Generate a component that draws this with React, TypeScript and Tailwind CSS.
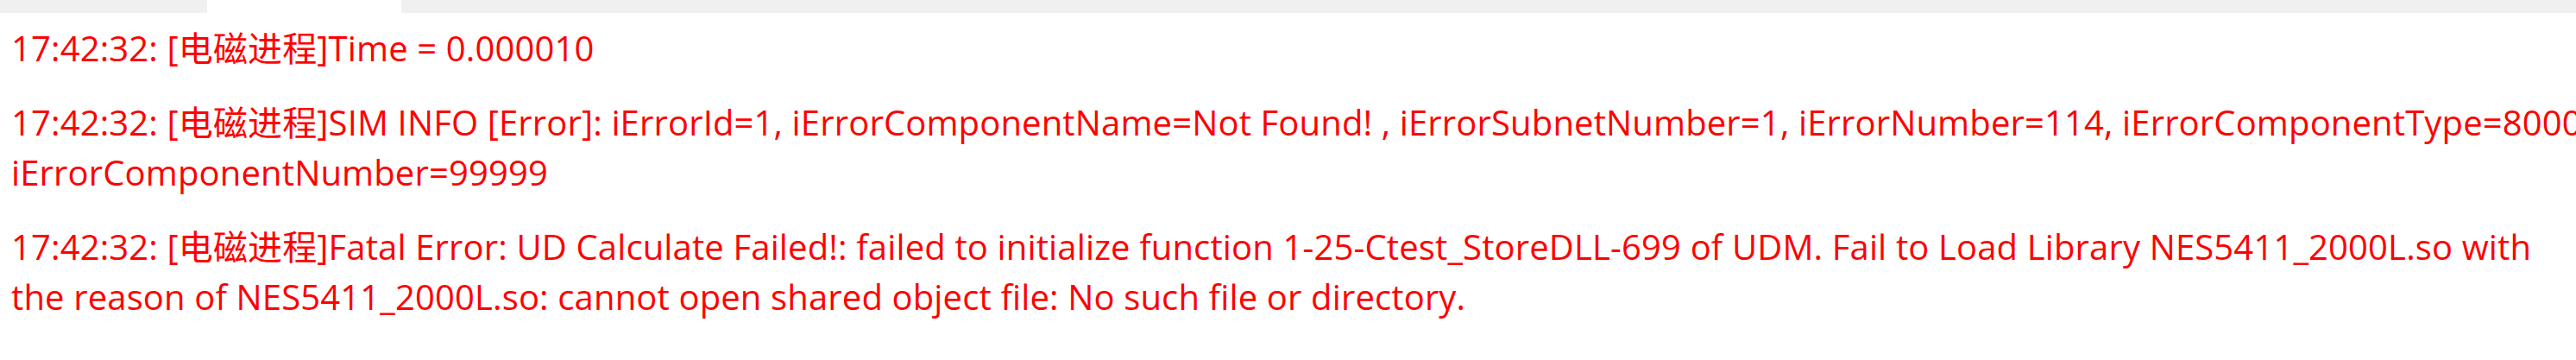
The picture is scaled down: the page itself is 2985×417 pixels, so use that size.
const lines: string[][] = [
  ["17:42:32: [电磁进程]Time = 0.000010"],
  [
    "17:42:32: [电磁进程]SIM INFO [Error]: iErrorId=1, iErrorComponentName=Not Found! , iErrorSubnetNumber=1, iErrorNumber=114, iErrorComponentType=8000",
    "iErrorComponentNumber=99999",
  ],
  [
    "17:42:32: [电磁进程]Fatal Error: UD Calculate Failed!: failed to initialize function 1-25-Ctest_StoreDLL-699 of UDM. Fail to Load Library NES5411_2000L.so with",
    "the reason of NES5411_2000L.so: cannot open shared object file: No such file or directory.",
  ],
];

export default function App() {
  return (
    <div className="w-[2985px] h-[417px] overflow-hidden bg-white">
      {/* tab strip */}
      <div className="flex h-[15px]">
        <div className="w-[240px] bg-[#f0f0f0]" />
        <div className="w-[225px] bg-white" />
        <div className="flex-1 bg-[#f0f0f0]" />
      </div>

      <div
        className="flex flex-col gap-[28px] pl-[13px] pt-[12px] text-[40px] leading-[58px] tracking-[0.14px] text-[#ff0000]"
        style={{ fontFamily: '"Open Sans", "Noto Sans CJK SC", sans-serif' }}
      >
        {lines.map((msg, i) => (
          <div key={i}>
            {msg.map((l, j) => (
              <div key={j} className="whitespace-nowrap">
                {l}
              </div>
            ))}
          </div>
        ))}
      </div>
    </div>
  );
}
